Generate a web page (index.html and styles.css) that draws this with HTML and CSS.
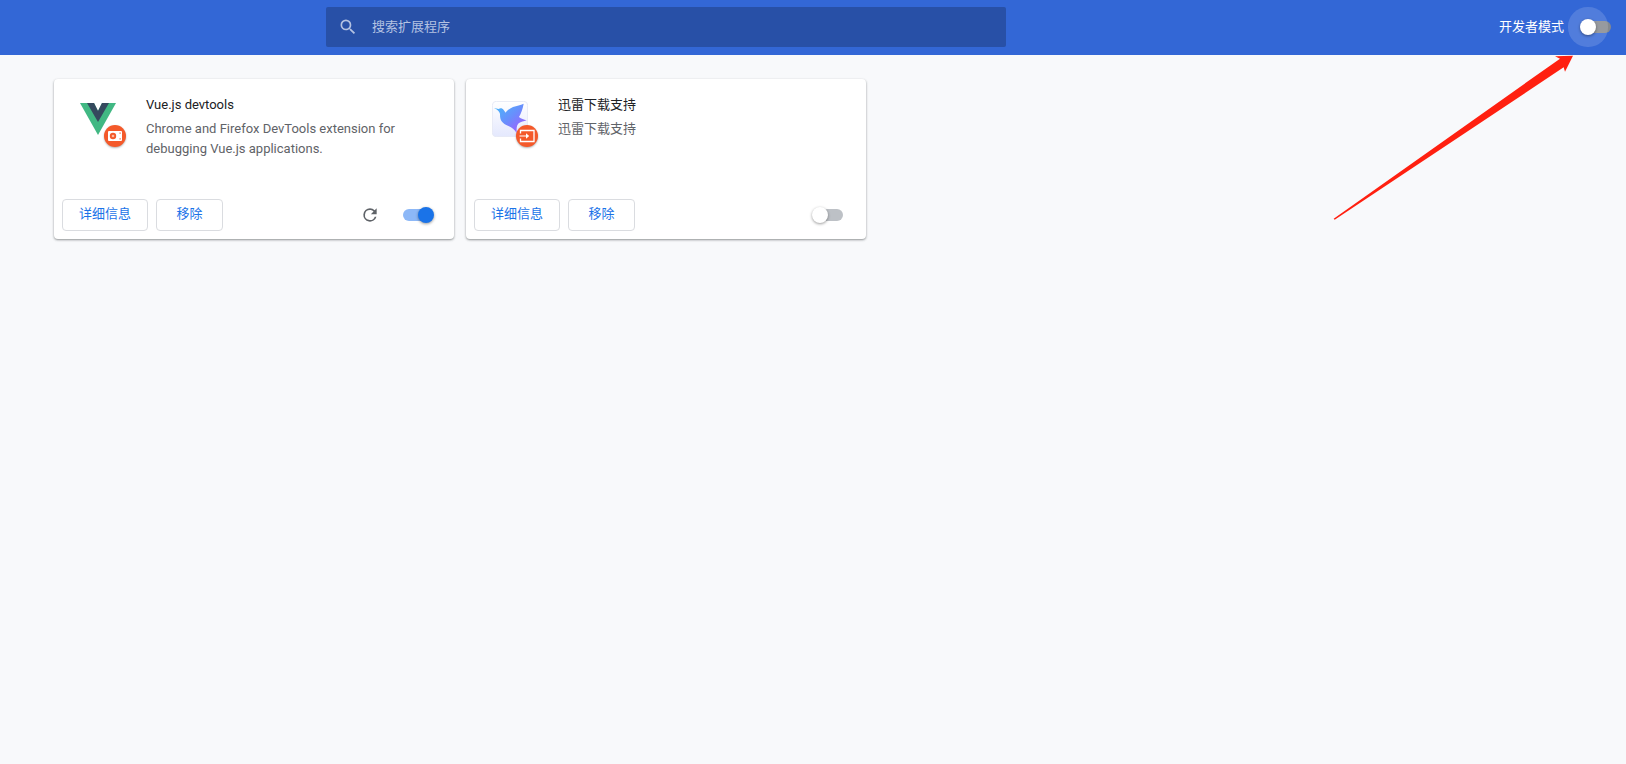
FILE: index.html
```html
<!DOCTYPE html>
<html lang="zh-CN">
<head>
    <meta charset="UTF-8">
    <meta name="viewport" content="width=device-width, initial-scale=1.0">
    <title>扩展程序</title>
    <link rel="stylesheet" href="styles.css">
</head>
<body>
    <header class="toolbar">
        <label class="search">
            <svg class="search-icon" viewBox="0 0 24 24" aria-hidden="true">
                <path d="M15.5 14h-.79l-.28-.27A6.47 6.47 0 0 0 16 9.5 6.5 6.5 0 1 0 9.5 16c1.61 0 3.09-.59 4.23-1.57l.27.28v.79l5 4.99L20.49 19l-4.99-5zm-6 0C7.01 14 5 11.99 5 9.5S7.01 5 9.5 5 14 7.01 14 9.5 11.99 14 9.5 14z"/>
            </svg>
            <input class="search-input" type="search" placeholder="搜索扩展程序" aria-label="搜索扩展程序">
        </label>
        <div class="dev-mode">
            <label for="devMode">开发者模式</label>
            <input class="toggle toggle-dev" type="checkbox" id="devMode">
        </div>
    </header>

    <main class="items">
        <!-- Vue.js devtools -->
        <article class="card">
            <div class="card-main">
                <div class="icon-wrap">
                    <svg class="icon" viewBox="0 0 36 36" aria-hidden="true">
                        <path fill="#41b883" d="M0 2h36L18 34z"/>
                        <path fill="#fff" d="M14 2h8l-4 8z"/>
                        <path fill="#35495e" d="M7 2h7l4 8 4-8h7L18 21z"/>
                    </svg>
                    <span class="badge">
                        <svg viewBox="0 0 22 22" aria-hidden="true">
                            <rect x="4" y="6" width="14" height="10" rx="1" fill="#fff"/>
                            <circle cx="9" cy="11" r="3.2" fill="#f4592a"/>
                            <circle cx="9" cy="11" r="1.3" fill="#fbb9a2"/>
                            <path fill="#f4592a" d="M15.5 7.500h1.200v1.200h-1.200zM15.500 13.300h1.200v1.200h-1.200z"/>
                        </svg>
                    </span>
                </div>
                <div class="info">
                    <div class="name">Vue.js devtools</div>
                    <div class="desc">Chrome and Firefox DevTools extension for debugging Vue.js applications.</div>
                </div>
            </div>
            <div class="card-actions">
                <button class="button" type="button">详细信息</button>
                <button class="button" type="button">移除</button>
                <button class="reload" type="button" aria-label="重新加载">
                    <svg viewBox="0 0 24 24" aria-hidden="true">
                        <path d="M17.65 6.35A7.96 7.96 0 0 0 12 4a8 8 0 1 0 7.73 10h-2.08A6 6 0 1 1 12 6c1.66 0 3.14.69 4.22 1.78L13 11h7V4l-2.35 2.350z"/>
                    </svg>
                </button>
                <input class="toggle" type="checkbox" aria-label="启用 Vue.js devtools" checked>
            </div>
        </article>

        <!-- 迅雷 -->
        <article class="card">
            <div class="card-main">
                <div class="icon-wrap">
                    <svg class="icon" viewBox="0 0 108 108" aria-hidden="true">
                        <defs>
                            <linearGradient id="tile" x1="0" y1="0" x2="0" y2="1">
                                <stop offset="0" stop-color="#fff"/>
                                <stop offset="1" stop-color="#e4e8fd"/>
                            </linearGradient>
                            <linearGradient id="bird" x1="0" y1="0.2" x2="0.8" y2="1">
                                <stop offset="0" stop-color="#4cb4fb"/>
                                <stop offset="0.5" stop-color="#6a8dfc"/>
                                <stop offset="1" stop-color="#a45cff"/>
                            </linearGradient>
                        </defs>
                        <rect x="1" y="1" width="106" height="106" rx="12" fill="url(#tile)" stroke="#e6e9f5" stroke-width="3"/>
                        <path fill="url(#bird)" d="M6 21l14 3c5-4 12-2 15 3l6 8c4-6 12-13 22-17 12-4 22-6 32-10-3 15-7 28-14 40 7 5 14 8 23 10-9 4-17 4-24 9-5 5-7 12-6 29-6-9-13-16-23-20-14-6-23-12-26-24-2-8 1-14-4-20-4-5-9-8-15-11z"/>
                    </svg>
                    <span class="badge">
                        <svg viewBox="0 0 22 22" aria-hidden="true">
                            <path fill="none" stroke="#fff" stroke-width="1.300" d="M4.500 8.500v-3h13.500v11H4.500v-3"/>
                            <path fill="#fff" d="M3.500 10.400H10V8.200l3.200 2.800-3.200 2.800v-2.200H3.500z"/>
                        </svg>
                    </span>
                </div>
                <div class="info">
                    <div class="name">迅雷下载支持</div>
                    <div class="desc">迅雷下载支持</div>
                </div>
            </div>
            <div class="card-actions">
                <button class="button" type="button">详细信息</button>
                <button class="button" type="button">移除</button>
                <input class="toggle" type="checkbox" aria-label="启用 迅雷下载支持">
            </div>
        </article>
    </main>

    <!-- 指向开发者模式开关的箭头 -->
    <svg class="arrow" viewBox="0 0 720 495" aria-hidden="true">
        <path fill="#ff2010" d="M720 2L666 4l15 7L2 491l3 3L692 37l4 13z"/>
    </svg>
</body>
</html>
```
FILE: styles.css
```css
body {
    margin: 0;
    min-height: 100vh;
    background: #f8f9fb;
    color: #202124;
    font-family: Roboto, "Noto Sans CJK SC", sans-serif;
    font-size: 13px;
    line-height: 20px;
}
.toolbar {
    display: grid;
    grid-template-columns: minmax(0, 680px) 1fr;
    align-items: center;
    height: 55px;
    padding: 0 12px 2px 326px;
    box-sizing: border-box;
    background: #3367d6;
    color: #fff;
}
.search {
    display: flex;
    align-items: center;
    gap: 14px;
    height: 40px;
    padding: 0 12px;
    border-radius: 2px;
    background: #2850a7;
}
.search-icon {
    width: 20px;
    height: 20px;
    flex: none;
    fill: #b4c2e2;
}
.search-input {
    flex: 1;
    min-width: 0;
    padding: 0;
    border: none;
    outline: none;
    background: none;
    color: #fff;
    font: inherit;
}
.search-input::placeholder {
    color: #b4c2e2;
}
.dev-mode {
    display: flex;
    align-items: center;
    justify-content: flex-end;
    gap: 16px;
}

/* 开关 */
.toggle {
    appearance: none;
    position: relative;
    flex: none;
    width: 34px;
    height: 16px;
    margin: 0;
    cursor: pointer;
}
.toggle::before {
    content: "";
    position: absolute;
    top: 2px;
    left: 3px;
    width: 28px;
    height: 12px;
    border-radius: 6px;
    background: #bdc1c6;
}
.toggle::after {
    content: "";
    position: absolute;
    top: 0;
    left: 0;
    width: 16px;
    height: 16px;
    border-radius: 50%;
    background: #fff;
    box-shadow: 0 1px 3px rgba(0, 0, 0, 0.4);
}
.toggle:checked::before {
    background: #8db8f7;
}
.toggle:checked::after {
    left: 18px;
    background: #1a73e8;
}
.toggle-dev::before {
    background: #85898f;
}
.toggle-dev::after {
    box-shadow: 0 1px 3px rgba(0, 0, 0, 0.4), 0 0 0 12px rgba(255, 255, 255, 0.15);
}

/* 扩展卡片 */
.items {
    display: flex;
    flex-wrap: wrap;
    gap: 12px;
    padding: 24px 54px;
}
.card {
    display: flex;
    flex-direction: column;
    width: 400px;
    height: 160px;
    border-radius: 4px;
    background: #fff;
    box-shadow: 0 1px 2px rgba(60, 64, 67, 0.4), 0 1px 3px rgba(60, 64, 67, 0.2);
}
.card-main {
    display: flex;
    flex: 1;
    gap: 30px;
    padding: 16px 20px 0 26px;
}
.icon-wrap {
    position: relative;
    flex: none;
    width: 36px;
    height: 36px;
    margin-top: 6px;
}
.icon {
    display: block;
    width: 36px;
    height: 36px;
}
.badge {
    position: absolute;
    top: 24px;
    left: 24px;
    width: 22px;
    height: 22px;
    border-radius: 50%;
    background: #f4592a;
    box-shadow: 0 1px 2px rgba(0, 0, 0, 0.3);
}
.badge svg {
    display: block;
}
.name {
    margin-bottom: 4px;
}
.desc {
    color: #5f6368;
}
.card-actions {
    display: flex;
    align-items: center;
    gap: 8px;
    padding: 0 20px 8px 8px;
}
.button {
    min-width: 67px;
    height: 32px;
    padding: 0 16px 2px;
    border: 1px solid #dadce0;
    border-radius: 4px;
    background: #fff;
    color: #1a73e8;
    font: inherit;
    cursor: pointer;
}
.card-actions .toggle {
    margin-left: auto;
}
.reload {
    width: 20px;
    height: 20px;
    margin-left: auto;
    padding: 0;
    border: none;
    background: none;
    cursor: pointer;
}
.reload svg {
    display: block;
    fill: #5f6368;
}
.card-actions .reload + .toggle {
    margin-left: 12px;
}

.arrow {
    position: absolute;
    top: 55px;
    right: 53px;
    width: 240px;
    height: 165px;
    pointer-events: none;
}
```
